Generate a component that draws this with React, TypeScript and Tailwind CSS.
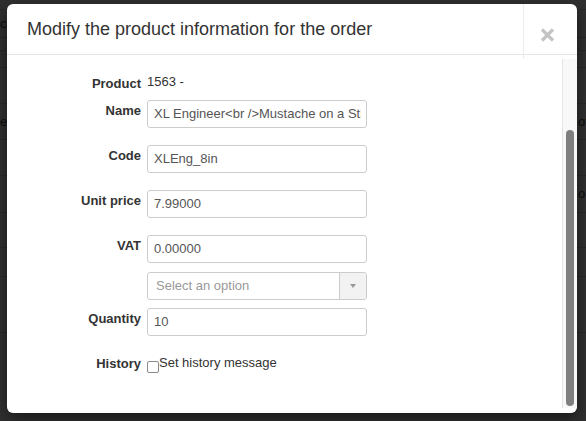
const backdropRows = [
  { h: "h-[10px]" },
  { h: "h-[28px]", left: "ce" },
  { h: "h-[13px]" },
  { h: "h-[17px]" },
  { h: "h-[36px]" },
  { h: "h-[36px]", left: "er", right: "of" },
  { h: "h-[36px]" },
  { h: "h-[37px]", right: "o" },
  { h: "h-[35px]" },
  { h: "h-[29px]" },
  { h: "h-[56px]" },
];

const fields = [
  { label: "Name", value: "XL Engineer<br />Mustache on a Stick", mt: "mt-[7px]" },
  { label: "Code", value: "XLEng_8in", mt: "mt-[17px]" },
  { label: "Unit price", value: "7.99000", mt: "mt-[17px]" },
  { label: "VAT", value: "0.00000", mt: "mt-[17px]" },
];

const TextField = ({ value }: { value: string }) => (
  <div className="h-[28px] w-[220px] rounded-[3px] border border-[#cccccc] bg-white pl-[6px] text-[13px] leading-[26px] text-[#555555]">
    <div className="w-[207px] overflow-hidden whitespace-nowrap">{value}</div>
  </div>
);

const Row = ({ label, children, className = "" }: { label: string; children: React.ReactNode; className?: string }) => (
  <div className={`flex items-start gap-[6px] ${className}`}>
    <div className="w-[134px] pt-[2px] text-right text-[13px] font-bold leading-[18px] text-[#333333]">{label}</div>
    {children}
  </div>
);

export default function App() {
  return (
    <div className="relative h-[421px] w-[586px] overflow-hidden bg-[#303030] font-['Liberation_Sans',Arial,sans-serif]">
      {/* dimmed order page behind the dialog */}
      <div className="flex flex-col">
        {backdropRows.map((row, i) => (
          <div key={i} className={`flex items-center justify-between border-b border-[#272727] ${row.h}`}>
            <div className="w-[8px] whitespace-nowrap text-right text-[13px] text-[#0e0e0e]">{row.left}</div>
            <div className="w-[8px] whitespace-nowrap text-[13px] text-[#0e0e0e]">{row.right}</div>
          </div>
        ))}
      </div>

      {/* dialog */}
      <div className="absolute left-[7px] top-[4px] flex h-[409px] w-[570px] flex-col overflow-hidden rounded-[6px] bg-white shadow-[0_5px_15px_rgba(0,0,0,0.5)]">
        <div className="h-[51px] shrink-0 border-b border-[#e5e5e5] pl-[20px] pt-[15px]">
          <h4 className="text-[18px] leading-[20px] text-[#333333]">Modify the product information for the order</h4>
        </div>

        <button className="absolute right-0 top-0 flex h-[55px] w-[54px] items-start border-l border-[#ececec]">
          <svg width="15" height="14" viewBox="0 0 15 14" className="ml-[16px] mt-[24px]">
            <path d="M2 1.5 L13 12.5 M13 1.5 L2 12.5" stroke="#c4c4c4" strokeWidth="3.2" />
          </svg>
        </button>

        <div className="flex min-h-0 flex-1">
          <div className="flex-1 pt-[18px]">
            <div className="flex items-start gap-[6px]">
              <div className="w-[134px] pt-[2px] text-right text-[13px] font-bold leading-[18px] text-[#333333]">Product</div>
              <div className="text-[13px] leading-[18px] text-[#333333]">1563 -</div>
            </div>

            {fields.map((f) => (
              <Row key={f.label} label={f.label} className={f.mt}>
                <TextField value={f.value} />
              </Row>
            ))}

            {/* tax rate picker */}
            <div className="ml-[140px] mt-[9px] flex h-[28px] w-[220px] rounded-[3px] border border-[#cccccc] bg-white">
              <div className="flex-1 pl-[8px] text-[13px] leading-[26px] text-[#999999]">Select an option</div>
              <div className="flex w-[27px] items-start justify-center rounded-r-[3px] border-l border-[#cccccc] bg-[#f2f2f2] pt-[11px]">
                <div className="h-0 w-0 border-x-[3.5px] border-t-[4px] border-x-transparent border-t-[#999999]" />
              </div>
            </div>

            <Row label="Quantity" className="mt-[8px]">
              <TextField value="10" />
            </Row>

            <div className="mt-[18px] flex items-start gap-[6px]">
              <div className="w-[134px] pt-[1px] text-right text-[13px] font-bold leading-[18px] text-[#333333]">History</div>
              <label className="flex items-start">
                <span className="mt-[7px] h-[12px] w-[12px] rounded-[2px] border border-[#8a8a8a] bg-white" />
                <span className="text-[13px] leading-[18px] text-[#333333]">Set history message</span>
              </label>
            </div>
          </div>

          {/* scrollbar */}
          <div className="mb-[5px] mt-[4px] w-[15px] border-l border-[#e6e6e6] bg-[#f8f8f8] pl-[3px] pt-[71px]">
            <div className="h-[276px] w-[8px] rounded-full bg-[#7f7f7f]" />
          </div>
        </div>
      </div>
    </div>
  );
}
